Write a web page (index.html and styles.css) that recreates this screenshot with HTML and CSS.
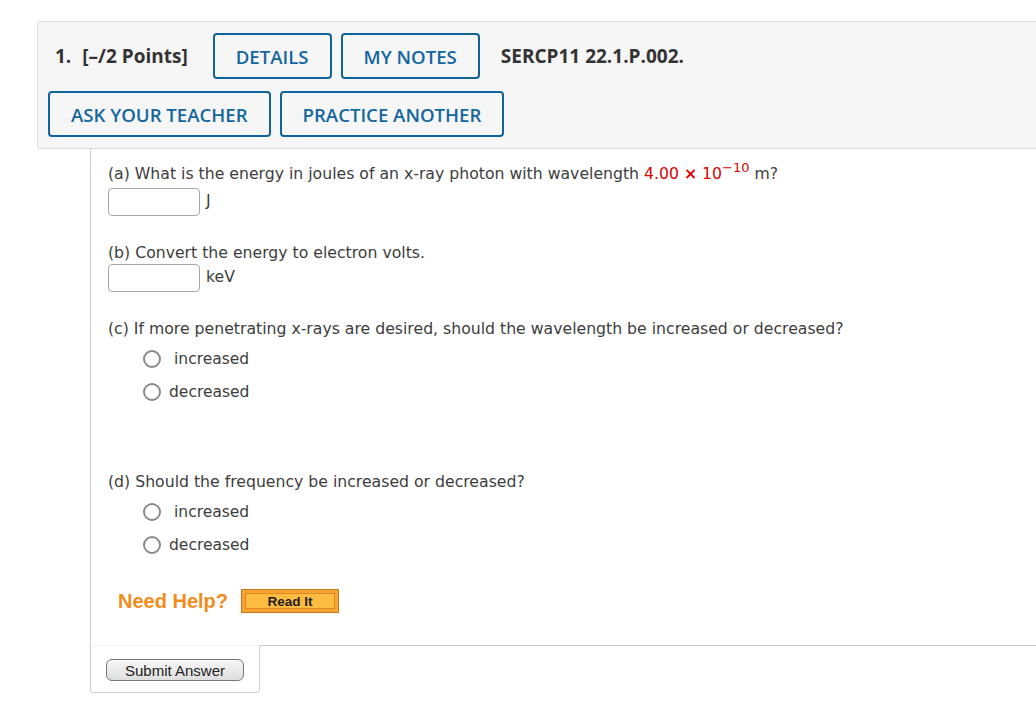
FILE: index.html
```html
<!DOCTYPE html>
<html>
<head>
<meta charset="utf-8">
<link rel="stylesheet" href="styles.css">
</head>
<body>
<div class="header">
  <div class="hrow first">
    <span class="qnum">1.</span>
    <span class="points">[–/2 Points]</span>
    <button class="hbtn">DETAILS</button>
    <button class="hbtn">MY NOTES</button>
    <span class="code">SERCP11 22.1.P.002.</span>
  </div>
  <div class="hrow">
    <button class="hbtn">ASK YOUR TEACHER</button>
    <button class="hbtn">PRACTICE ANOTHER</button>
  </div>
</div>
<div class="panel">
  <div class="part part-a">
    <div class="qtext">(a) What is the energy in joules of an x-ray photon with wavelength <span class="red">4.00 <b class="times">×</b> 10<sup>−10</sup></span> m?</div>
    <div class="answer"><span class="box"></span><span class="unit">J</span></div>
  </div>
  <div class="part part-b">
    <div class="qtext">(b) Convert the energy to electron volts.</div>
    <div class="answer"><span class="box"></span><span class="unit">keV</span></div>
  </div>
  <div class="part part-c">
    <div class="qtext">(c) If more penetrating x-rays are desired, should the wavelength be increased or decreased?</div>
    <div class="choice"><span class="radio"></span><span class="label wide">increased</span></div>
    <div class="choice"><span class="radio"></span><span class="label">decreased</span></div>
  </div>
  <div class="part part-d">
    <div class="qtext">(d) Should the frequency be increased or decreased?</div>
    <div class="choice"><span class="radio"></span><span class="label wide">increased</span></div>
    <div class="choice"><span class="radio"></span><span class="label">decreased</span></div>
  </div>
  <div class="help">
    <span class="need">Need Help?</span>
    <span class="readit"><span class="readit-inner">Read It</span></span>
  </div>
</div>
<div class="bottom">
  <div class="submit-area"><button class="submit">Submit Answer</button></div>
  <div class="rest"></div>
</div>
</body>
</html>
```
FILE: styles.css
```css
html, body {
  margin: 0;
  padding: 0;
  background: #fff;
  overflow: hidden;
}
body {
  width: 1036px;
  height: 702px;
}
.header {
  margin: 21px -20px 0 37px;
  background: #f6f6f6;
  border: 1px solid #dcdcdc;
  border-radius: 3px;
  padding: 11px 0 11px 10px;
  font-family: "Open Sans", "Liberation Sans", sans-serif;
}
.hrow {
  display: flex;
  align-items: center;
  height: 46px;
}
.hrow + .hrow {
  margin-top: 12px;
}
.hrow.first {
  padding-left: 7px;
}
.qnum, .points, .code {
  font-weight: 700;
  font-size: 19px;
  color: #333;
}
.points {
  margin-left: 11px;
  margin-right: 25px;
}
.code {
  margin-left: 12px;
}
.hbtn {
  height: 46px;
  box-sizing: border-box;
  padding: 0 21px;
  border: 2px solid #11639b;
  border-radius: 4px;
  background: transparent;
  color: #13679f;
  font-family: "Open Sans", "Liberation Sans", sans-serif;
  font-weight: 600;
  font-size: 18.6px;
  margin-right: 9px;
}
.panel {
  margin-left: 90px;
  border-left: 1px solid #d0d0d0;
  padding: 15px 0 32px 17px;
  font-family: "DejaVu Sans", Verdana, sans-serif;
  font-size: 15.7px;
  color: #3d3d3d;
}
.qtext {
  line-height: 20px;
}
.part.part-b {
  margin-top: 27px;
}
.part.part-c {
  margin-top: 27px;
}
.part.part-d {
  margin-top: 64px;
}
.red {
  color: #e00000;
}
.times {
  font-weight: 700;
}
sup {
  font-size: 13px;
  vertical-align: 7px;
  line-height: 0;
}
.answer {
  display: flex;
  align-items: center;
  margin-top: 4px;
}
.part-b .answer {
  margin-top: 1px;
}
.box {
  width: 92px;
  height: 28px;
  box-sizing: border-box;
  border: 1px solid #a8a8a8;
  border-radius: 4px;
  background: #fff;
}
.unit {
  margin-left: 6px;
  margin-top: -4px;
}
.choice {
  display: flex;
  align-items: center;
  height: 33px;
  padding-left: 35px;
  font-size: 15.5px;
}
.part .qtext + .choice {
  margin-top: 3px;
}
.radio {
  width: 18px;
  height: 18px;
  box-sizing: border-box;
  border: 2px solid #8a8a8a;
  border-radius: 50%;
  background: #fff;
}
.label {
  margin-left: 8px;
}
.label.wide {
  margin-left: 13px;
}
.help {
  display: flex;
  align-items: center;
  margin-top: 28px;
  padding-left: 10px;
  height: 24px;
}
.need {
  font-family: "Liberation Sans", Arial, sans-serif;
  font-weight: 700;
  font-size: 20px;
  color: #f28c1c;
  margin-right: 13px;
}
.readit {
  display: flex;
  align-items: center;
  justify-content: center;
  width: 98px;
  height: 24px;
  box-sizing: border-box;
  background: #f5a332;
  border: 1px solid #c57818;
}
.readit-inner {
  display: flex;
  align-items: center;
  justify-content: center;
  width: 90px;
  height: 16px;
  box-sizing: border-box;
  background: #ffbc42;
  border: 1px solid #e08a1e;
  font-family: "Liberation Sans", Arial, sans-serif;
  font-weight: 700;
  font-size: 13.5px;
  color: #1e1e1e;
}
.bottom {
  display: flex;
  margin-left: 90px;
}
.submit-area {
  width: 170px;
  height: 48px;
  box-sizing: border-box;
  border: 1px solid #d0d0d0;
  border-top: 1px solid #f4f4f4;
  border-radius: 0 0 4px 4px;
  padding: 13px 0 0 15px;
}
.rest {
  flex: 1;
  border-top: 1px solid #cccccc;
}
.submit {
  width: 138px;
  height: 22px;
  box-sizing: border-box;
  border: 1px solid #777;
  border-radius: 6px;
  background: linear-gradient(#f7f7f7, #dedede);
  font-family: "Liberation Sans", Arial, sans-serif;
  font-size: 15px;
  color: #222;
  padding: 0;
  display: block;
}
```
